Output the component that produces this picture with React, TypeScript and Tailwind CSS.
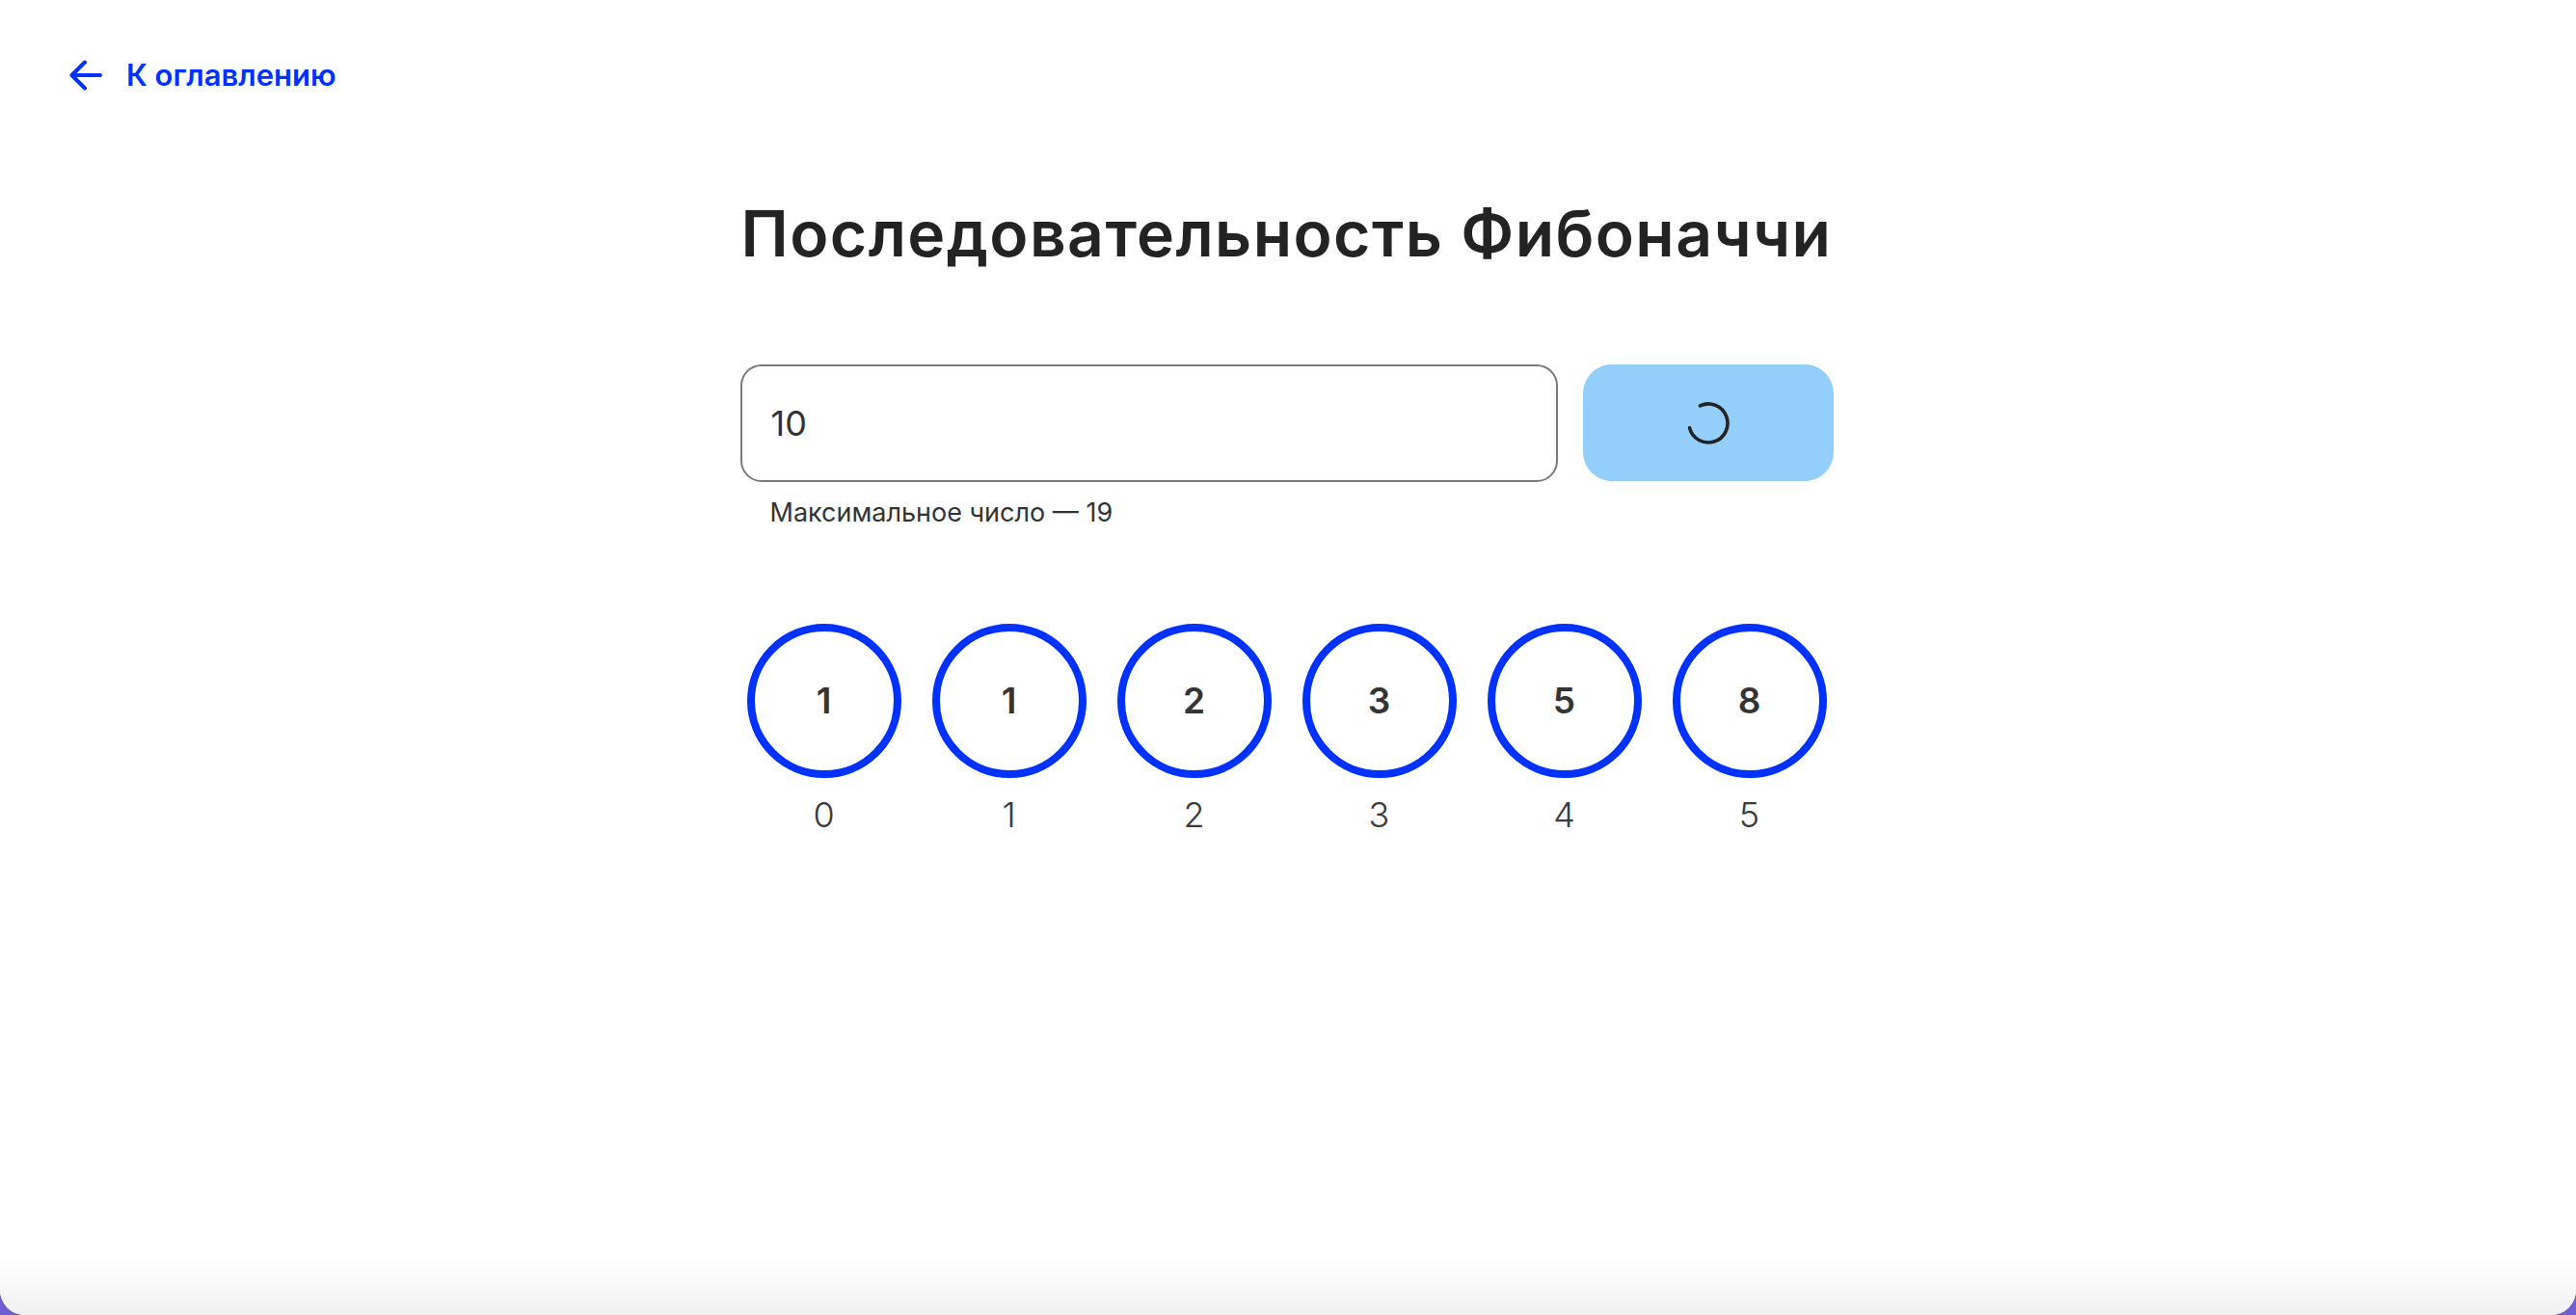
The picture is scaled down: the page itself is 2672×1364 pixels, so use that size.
const fib = [1, 1, 2, 3, 5, 8];

function BackArrow() {
  return (
    <svg width="34" height="32" viewBox="0 0 34 32" fill="none">
      <path
        d="M32 16H2.5M16 2.5 2.5 16 16 29.5"
        stroke="currentColor"
        strokeWidth="4"
        strokeLinecap="round"
        strokeLinejoin="round"
      />
    </svg>
  );
}

function Spinner() {
  return (
    <svg width="48" height="48" viewBox="0 0 48 48" fill="none">
      <path
        d="M15.55 5.87A20 20 0 1 1 4.59 28.84"
        stroke="#232323"
        strokeWidth="3.6"
        strokeLinecap="round"
      />
    </svg>
  );
}

function Circle({ value, index }: { value: number; index: number }) {
  return (
    <div className="flex flex-col items-center">
      <div className="flex h-[160px] w-[160px] items-center justify-center rounded-full border-[8px] border-[#0032ff] bg-white">
        <span className="text-[37px] font-semibold text-[#343434]">{value}</span>
      </div>
      <span className="mt-[16px] text-[36px] leading-[44px] font-light text-[#3a3a3a]">{index}</span>
    </div>
  );
}

export default function App() {
  return (
    <div className="h-screen bg-[#6f5fd0] font-['Inter','Noto_Sans',sans-serif]">
      <div className="flex h-full flex-col overflow-hidden rounded-b-[26px] bg-white">
        {/* back link */}
        <div className="pt-[60px] pl-[72px]">
          <a href="#" className="flex items-center gap-[25px] text-[#0032ff]">
            <BackArrow />
            <span className="text-[31px] leading-[36px] font-semibold">К оглавлению</span>
          </a>
        </div>

        <main className="flex flex-col items-center pr-[3px]">
          <h1 className="mt-[106px] text-[66px] leading-[80px] font-semibold tracking-[1.4px] text-[#232323]">
            Последовательность Фибоначчи
          </h1>

          <div className="mt-[96px] w-[1134px]">
            <div className="flex items-start gap-[26px]">
              <div className="flex h-[122px] w-[848px] items-center rounded-[22px] border-2 border-[#7a7a7a] pl-[30px]">
                <span className="text-[36px] text-[#333]">10</span>
              </div>
              <button className="flex h-[121px] w-[260px] items-center justify-center rounded-[30px] bg-[#94cefa]">
                <Spinner />
              </button>
            </div>
            <p className="mt-[16px] pl-[31px] text-[27px] leading-[32px] text-[#333]">
              Максимальное число — 19
            </p>
          </div>

          <div className="mt-[99px] flex gap-[32px]">
            {fib.map((v, i) => (
              <Circle key={i} value={v} index={i} />
            ))}
          </div>
        </main>

        <div className="mt-auto h-[60px] bg-linear-to-b from-white to-[#f1f1f1]" />
      </div>
    </div>
  );
}
